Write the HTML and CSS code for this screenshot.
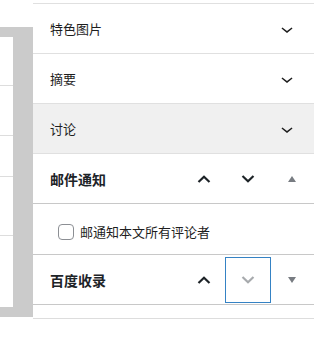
FILE: index.html
```html
<html><head><meta charset="UTF-8">
<title>文章设置</title>
<link rel="stylesheet" href="styles.css">
</head>
<body>
  <div class="page">

    <div class="side">
      <div class="frame">
        <div class="sheet">
          <div class="line h49"></div>
          <div class="line h50"></div>
          <div class="line h41"></div>
          <div class="line h59"></div>
        </div>
      </div>
    </div>

    <div class="panel">

      <div class="row">
        <span>特色图片</span>
        <svg class="chev" viewBox="0 0 24 24"><path d="M17.5 11.6L12 16l-5.5-4.4.9-1.2L12 14l4.6-3.6.9 1.2z"/></svg>
      </div>
      <div class="row">
        <span>摘要</span>
        <svg class="chev" viewBox="0 0 24 24"><path d="M17.5 11.6L12 16l-5.5-4.4.9-1.2L12 14l4.6-3.6.9 1.2z"/></svg>
      </div>
      <div class="row hover">
        <span>讨论</span>
        <svg class="chev" viewBox="0 0 24 24"><path d="M17.5 11.6L12 16l-5.5-4.4.9-1.2L12 14l4.6-3.6.9 1.2z"/></svg>
      </div>

      <div class="box">
        <div class="head">
          <span class="capt">邮件通知</span>
          <span class="btns">
            <span class="btn"><svg viewBox="0 0 14 8"><polyline points="1.5,7 7,1.8 12.5,7"/></svg></span>
            <span class="btn"><svg viewBox="0 0 14 8"><polyline points="1.5,1 7,6.2 12.5,1"/></svg></span>
            <span class="btn"><span class="tri up"></span></span>
          </span>
        </div>
        <label class="inside"><span class="check"></span>邮通知本文所有评论者</label>
      </div>

      <div class="box">
        <div class="head">
          <span class="capt">百度收录</span>
          <span class="btns">
            <span class="btn"><svg viewBox="0 0 14 8"><polyline points="1.5,7 7,1.8 12.5,7"/></svg></span>
            <span class="btn focus off"><svg viewBox="0 0 14 8"><polyline points="1.5,1 7,6.2 12.5,1"/></svg></span>
            <span class="btn"><span class="tri down"></span></span>
          </span>
        </div>
      </div>

      <div class="tail"></div>

    </div>

  </div>
</body></html>
```

FILE: styles.css
```css
body
{
  margin : 0;
  background : #fff;
  font-family : "Noto Sans CJK SC", "Liberation Sans", sans-serif;
  font-size : 13px;
  color : #1e1e1e;
}

.page
{
  display : flex;
  width : 314px;
}

/* левая часть : серая рамка с белым листом */
.side
{
  width : 33px;
  padding-top : 27px;
}
.frame
{
  background : #cbcbcb;
  padding : 10px 20px 10px 0;
}
.sheet
{
  background : #fff;
  height : 270px;
}
.line
{
  border-bottom : 1px solid #ddd;
}
.h49 { height : 48px; }
.h50 { height : 49px; }
.h41 { height : 40px; }
.h59 { height : 58px; }

/* правая панель */
.panel
{
  width : 281px;
  margin-top : 3px;
  border-top : 1px solid #e0e0e0;
}

.row
{
  height : 49px;
  display : flex;
  align-items : center;
  justify-content : space-between;
  padding : 0 15px 0 17px;
  border-bottom : 1px solid #e0e0e0;
}
.row.hover
{
  background : #f0f0f0;
}
.chev
{
  width : 24px;
  height : 24px;
  fill : #1e1e1e;
}

.box
{
  border-bottom : 1px solid #c8c8c8;
}
.head
{
  height : 49px;
  display : flex;
  align-items : center;
  justify-content : space-between;
  padding-left : 17px;
}
.capt
{
  font-size : 14px;
  font-weight : bold;
  color : #1d2327;
}
.btns
{
  display : flex;
  align-items : center;
}
.btn
{
  width : 44px;
  height : 44px;
  display : flex;
  align-items : center;
  justify-content : center;
}
.btn svg
{
  width : 14px;
  height : 8px;
  fill : none;
  stroke : #1d2327;
  stroke-width : 2.2;
}
.btn.off svg
{
  stroke : #a7aaad;
}
.btn.focus
{
  outline : 1px solid #3582c4;
}
.tri
{
  width : 0;
  height : 0;
  border-left : 4.5px solid transparent;
  border-right : 4.5px solid transparent;
}
.tri.up
{
  border-bottom : 6px solid #787c82;
}
.tri.down
{
  border-top : 6px solid #787c82;
}

.inside
{
  display : flex;
  align-items : center;
  padding : 20px 0 14px 25px;
  border-top : 1px solid #c8c8c8;
  height : 16px;
  line-height : 16px;
}
.check
{
  width : 14px;
  height : 14px;
  border : 1px solid #8c8f94;
  border-radius : 4px;
  margin-right : 6px;
}

.tail
{
  height : 13px;
  border-bottom : 1px solid #ddd;
}
```
